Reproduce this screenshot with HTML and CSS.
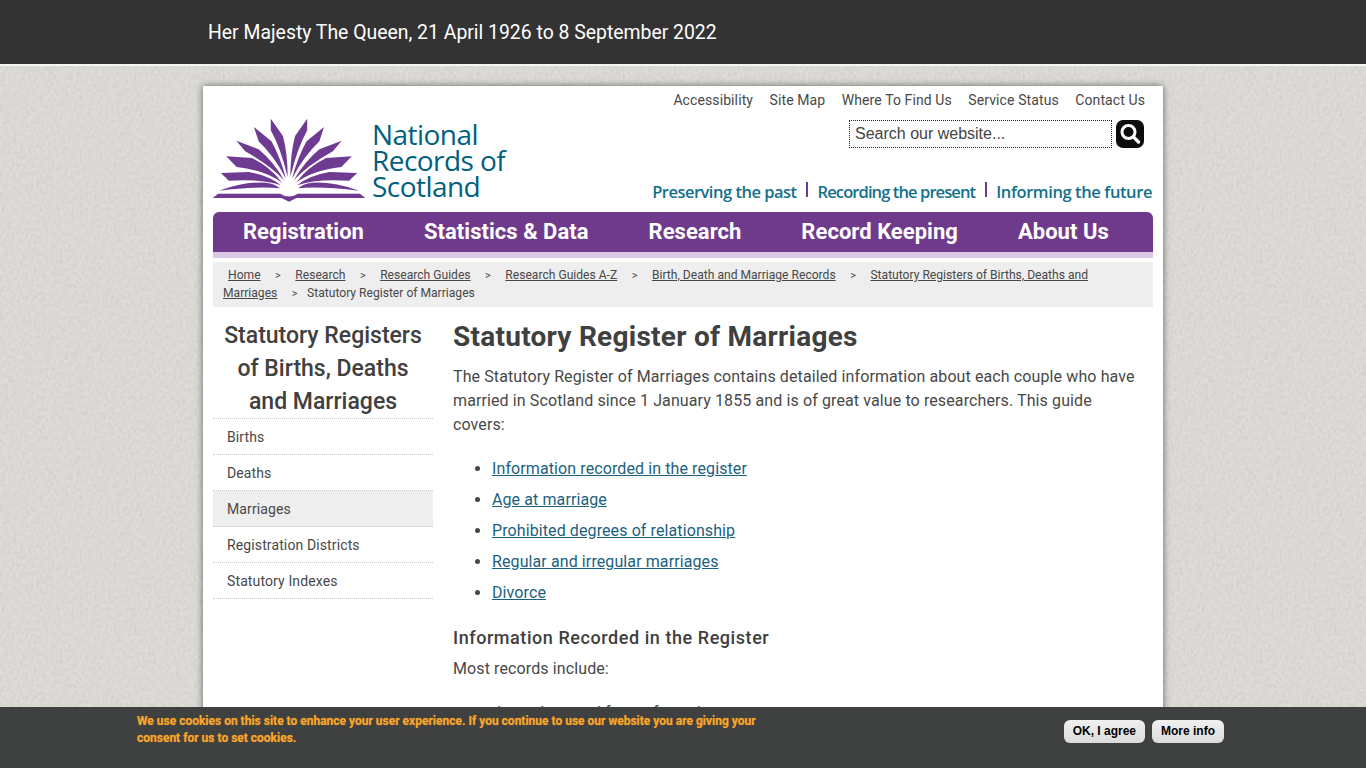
FILE: index.html
```html
<!DOCTYPE html>
<html lang="en">
<head>
<meta charset="utf-8">
<title>Statutory Register of Marriages</title>
<link rel="stylesheet" href="styles.css">
</head>
<body>
<div class="topbar"><div class="topbar-inner">Her Majesty The Queen, 21 April 1926 to 8 September 2022</div></div>
<div class="page">
  <header class="header">
    <a class="logo" href="#">
      <svg class="logo-mark" width="162" height="92" viewBox="0 0 480 276" preserveAspectRatio="none" aria-hidden="true">
        <defs>
          <g id="petals">
            <path d="M186 20 L222 72 Q236 125 236 195 Q216 110 186 55 Z"/>
            <path d="M136 45 L188 88 Q214 135 231 200 Q198 135 150 88 Z"/>
            <path d="M84 86 L150 112 Q195 150 226 205 Q185 160 110 118 Z"/>
            <path d="M54 133 L130 138 Q185 165 219 212 Q170 175 85 165 Z"/>
            <path d="M38 183 L120 180 Q180 190 216 220 Q165 200 62 206 Z"/>
            <path d="M32 236 Q110 208 172 212 Q200 216 213 229 Q150 222 32 236 Z"/>
          </g>
        </defs>
        <g fill="#6f3a92">
          <use href="#petals"/>
          <use href="#petals" transform="translate(480 0) scale(-1 1)"/>
          <path d="M14 258 L30 245 L214 245 Q240 262 266 245 L450 245 L466 258 L262 258 L240 269 L218 258 Z"/>
        </g>
      </svg>
      <span class="logo-text">National<br>Records of<br>Scotland</span>
    </a>
    <div class="header-right">
      <nav class="toplinks">
        <a href="#">Accessibility</a>
        <a href="#">Site Map</a>
        <a href="#">Where To Find Us</a>
        <a href="#">Service Status</a>
        <a href="#">Contact Us</a>
      </nav>
      <form class="search">
        <input class="search-input" type="text" value="Search our website...">
        <button class="search-btn" type="button" aria-label="Search">
          <svg width="28" height="28" viewBox="0 0 28 28" aria-hidden="true">
            <circle cx="12.5" cy="12" r="6.5" fill="none" stroke="#fff" stroke-width="3"/>
            <path d="M17.5 17 L22.5 22" stroke="#fff" stroke-width="3.4" stroke-linecap="round"/>
          </svg>
        </button>
      </form>
      <div class="tagline">
        <span class="tag-a">Preserving the past</span><i class="sep"></i><span class="tag-b">Recording the present</span><i class="sep"></i><span class="tag-c">Informing the future</span>
      </div>
    </div>
  </header>
  <nav class="mainnav">
    <a href="#">Registration</a>
    <a href="#">Statistics &amp; Data</a>
    <a href="#">Research</a>
    <a href="#">Record Keeping</a>
    <a href="#">About Us</a>
  </nav>
  <div class="crumbs">
    <a class="first" href="#">Home</a><span class="gt">&gt;</span><a href="#">Research</a><span class="gt">&gt;</span><a href="#">Research Guides</a><span class="gt">&gt;</span><a href="#">Research Guides A-Z</a><span class="gt">&gt;</span><a href="#">Birth, Death and Marriage Records</a><span class="gt">&gt;</span><a href="#">Statutory Registers of Births, Deaths and Marriages</a><span class="gt last">&gt;</span>Statutory Register of Marriages
  </div>
  <div class="columns">
    <aside class="side">
      <h2 class="side-title">Statutory Registers of Births, Deaths and Marriages</h2>
      <ul class="side-menu">
        <li><a href="#">Births</a></li>
        <li><a href="#">Deaths</a></li>
        <li class="active"><a href="#">Marriages</a></li>
        <li><a href="#">Registration Districts</a></li>
        <li><a href="#">Statutory Indexes</a></li>
      </ul>
    </aside>
    <main class="content">
      <h1>Statutory Register of Marriages</h1>
      <p>The Statutory Register of Marriages contains detailed information about each couple who have married in Scotland since 1 January 1855 and is of great value to researchers. This guide covers:</p>
      <ul class="links">
        <li><a href="#">Information recorded in the register</a></li>
        <li><a href="#">Age at marriage</a></li>
        <li><a href="#">Prohibited degrees of relationship</a></li>
        <li><a href="#">Regular and irregular marriages</a></li>
        <li><a href="#">Divorce</a></li>
      </ul>
      <h3>Information Recorded in the Register</h3>
      <p>Most records include:</p>
      <ul class="links">
        <li>date, place and form of marriage</li>
      </ul>
    </main>
  </div>
</div>
<div class="cookie">
  <div class="cookie-text">We use cookies on this site to enhance your user experience. If you continue to use our website you are giving your consent for us to set cookies.</div>
  <div class="cookie-btns">
    <button type="button">OK, I agree</button>
    <button type="button">More info</button>
  </div>
</div>
</body>
</html>
```

FILE: styles.css
```css
* { box-sizing: border-box; }
html, body { margin: 0; padding: 0; }
body {
  font-family: Roboto, sans-serif;
  color: #484848;
  background-color: #dedcd7;
  background-image: url("data:image/svg+xml,%3Csvg xmlns='http://www.w3.org/2000/svg' width='400' height='400'%3E%3Cfilter id='n'%3E%3CfeTurbulence type='fractalNoise' baseFrequency='.35 .25' numOctaves='4' stitchTiles='stitch'/%3E%3CfeColorMatrix values='0 0 0 0 .5 0 0 0 0 .5 0 0 0 0 .47 .5 .5 0 0 -.38'/%3E%3C/filter%3E%3Crect width='400' height='400' filter='url(%23n)'/%3E%3C/svg%3E");
}
a { color: inherit; }

.topbar {
  height: 66px;
  background: #333;
  border-bottom: 2px solid #f4f4f2;
}
.topbar-inner {
  width: 960px;
  margin: 0 auto;
  padding: 21px 5px 0;
  color: #fff;
  font-size: 19.4px;
  line-height: 24px;
}

.page {
  width: 960px;
  margin: 20px auto 0;
  padding: 0 10px 60px;
  background: #fff;
  box-shadow: 0 0 7px rgba(0, 0, 0, .55);
}

.header {
  height: 126px;
  display: flex;
  justify-content: space-between;
}
.logo {
  display: flex;
  align-items: flex-start;
  padding-top: 26px;
  margin-left: -5px;
  text-decoration: none;
}
.logo-mark { flex: none; }
.logo-text {
  margin: 9px 0 0 2px;
  font-family: "Open Sans", sans-serif;
  font-size: 28px;
  font-weight: 500;
  line-height: 26px;
  letter-spacing: -.55px;
  color: #00607d;
}
.header-right {
  display: flex;
  flex-direction: column;
  align-items: flex-end;
}
.toplinks {
  display: flex;
  gap: 16.5px;
  margin-right: 8px;
  height: 34px;
  padding-top: 6px;
  font-size: 14px;
  line-height: 16px;
  letter-spacing: .1px;
}
.toplinks a { text-decoration: none; color: #484848; }
.search {
  display: flex;
  gap: 4px;
  margin-right: 9px;
  height: 28px;
}
.search-input {
  width: 263px;
  height: 28px;
  border: 1px dotted #222;
  padding: 0 5px 1px;
  font: 16px "Liberation Sans", sans-serif;
  color: #444;
  background: #fff;
}
.search-btn {
  width: 28px;
  height: 28px;
  padding: 0;
  border: 0;
  border-radius: 7px;
  background: #0c0c0c;
}
.search-btn svg { display: block; }
.tagline {
  display: flex;
  align-items: flex-end;
  margin-top: 34px;
  margin-right: 1px;
  font-family: "Open Sans", sans-serif;
  font-size: 16.5px;
  font-weight: 600;
  line-height: 20px;
  color: #13708c;
  white-space: nowrap;
}
.tag-a { letter-spacing: -.5px; }
.tag-b { letter-spacing: -.9px; }
.tag-c { letter-spacing: -.4px; }
.sep {
  width: 2px;
  height: 15px;
  margin: 0 9.5px 5px;
  background: #6f3a92;
}

.mainnav {
  display: flex;
  height: 46px;
  border-radius: 6px 6px 0 0;
  background: #6f3a8c;
  border-bottom: 6px solid #d9c9e4;
}
.mainnav a {
  padding: 0 30px;
  color: #fff;
  font-size: 22px;
  font-weight: 700;
  line-height: 39px;
  letter-spacing: .03px;
  white-space: nowrap;
  text-decoration: none;
}

.crumbs {
  margin-top: 4px;
  padding: 4px 10px 5px;
  background: #eee;
  font-size: 12.1px;
  line-height: 18px;
  color: #484848;
}
.crumbs .first { margin-left: 5px; }
.crumbs a { color: #484848; }
.gt { margin: 0 14.5px; font-size: 11px; line-height: 1; }
.gt.last { margin-right: 9.5px; }

.columns {
  display: flex;
  gap: 20px;
  margin-top: 11px;
}
.side { flex: none; width: 220px; }
.side-title {
  margin: 1px 0 -1px;
  padding: 0 10px;
  font-size: 23px;
  font-weight: 500;
  line-height: 33px;
  text-align: center;
  color: #404040;
}
.side-menu {
  list-style: none;
  margin: 1px 0 0;
  padding: 0;
  border-top: 1px dotted #ccc;
}
.side-menu li {
  height: 36px;
  border-bottom: 1px dotted #ccc;
  padding-left: 14px;
  font-size: 14px;
  line-height: 36px;
  letter-spacing: .12px;
}
.side-menu a { text-decoration: none; color: #484848; }
.side-menu .active { background: #eee; }

.content { flex: 1; padding-right: 8px; }
.content h1 {
  margin: 1px 0 0;
  font-size: 28px;
  font-weight: 700;
  line-height: 36px;
  letter-spacing: .26px;
  color: #404040;
}
.content p {
  margin: 10px 0 0;
  font-size: 16px;
  line-height: 24px;
  letter-spacing: .11px;
}
.links {
  margin: 16px 0 0;
  padding-left: 39px;
  font-size: 16px;
  line-height: 31px;
  letter-spacing: .1px;
}
.links a { color: #1c5f80; }
.content h3 {
  margin: 18px 0 0;
  font-size: 18px;
  font-weight: 500;
  line-height: 24px;
  color: #404040;
  letter-spacing: .56px;
}
.content h3 + p { margin-top: 7px; }

.cookie {
  position: fixed;
  left: 0;
  right: 0;
  bottom: 0;
  height: 61px;
  background: #3f4140;
  display: flex;
  justify-content: space-between;
  padding: 6px 142px 0 137px;
}
.cookie-text {
  width: 630px;
  color: #f9a52b;
  font-size: 12px;
  font-weight: 700;
  line-height: 17px;
  text-shadow: 0 0 1px rgba(249, 165, 43, .6);
}
.cookie-btns {
  display: flex;
  gap: 7px;
  padding-top: 7px;
  align-items: flex-start;
}
.cookie-btns button {
  height: 23px;
  padding: 0 9px 1px;
  border: 0;
  border-radius: 6px;
  background: linear-gradient(#f0f0f0, #dcdcdc);
  color: #000;
  font: 700 12px "Liberation Sans", sans-serif;
}
```
